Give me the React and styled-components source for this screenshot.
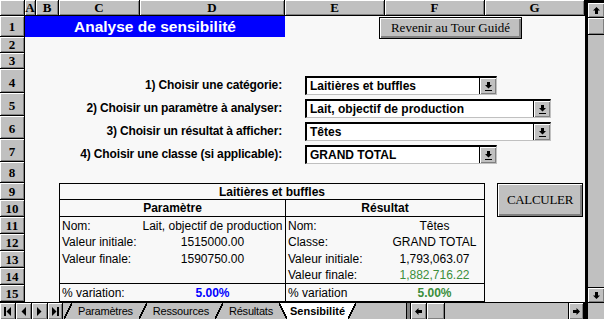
import React from 'react';
import styled, { createGlobalStyle, css } from 'styled-components';

const GRAY = '#c0c0c0';
const SHADE = '#808080';
const PAPER = '#f8f8f8';
const BLUE = '#0000ff';
const GREEN = '#3b8e3b';
const SANS = '"Liberation Sans", Arial, sans-serif';
const SERIF = '"Liberation Serif", "Times New Roman", serif';

const COLUMNS = ['A', 'B', 'C', 'D', 'E', 'F', 'G'];
const ROW_HEIGHTS = [21, 16, 16, 24, 23, 23, 23, 21, 17, 17, 17, 17, 17, 17, 17];

const prompts = [
  { row: 4, label: '1) Choisir une catégorie:', value: 'Laitières et buffles', width: 192 },
  { row: 5, label: '2) Choisir un paramètre à analyser:', value: 'Lait, objectif de production', width: 246 },
  { row: 6, label: '3) Choisir un résultat à afficher:', value: 'Têtes', width: 246 },
  { row: 7, label: '4) Choisir une classe (si applicable):', value: 'GRAND TOTAL', width: 192 },
];

const details = [
  ['Nom:', 'Lait, objectif de production', 'Nom:', 'Têtes'],
  ['Valeur initiale:', '1515000.00', 'Classe:', 'GRAND TOTAL'],
  ['Valeur finale:', '1590750.00', 'Valeur initiale:', '1,793,063.07'],
  ['', '', 'Valeur finale:', '1,882,716.22', GREEN],
];

const sheets = ['Paramètres', 'Ressources', 'Résultats'];

export default function App() {
  return (
    <>
      <GlobalStyle />
      <Window>
        <Sheet>
          <HeaderCell $col={1} $row={1} />
          {COLUMNS.map((c, i) => (
            <HeaderCell key={c} $col={i + 2} $row={1}>{c}</HeaderCell>
          ))}
          {ROW_HEIGHTS.map((h, i) => (
            <HeaderCell key={i} $col={1} $row={i + 2} $bottom={h > 17}>{i + 1}</HeaderCell>
          ))}

          <TitleBar>Analyse de sensibilité</TitleBar>
          <ReturnButton>Revenir au Tour Guidé</ReturnButton>

          {prompts.map((p) => (
            <React.Fragment key={p.row}>
              <PromptLabel $row={p.row + 1}>{p.label}</PromptLabel>
              <Dropdown $row={p.row + 1} $width={p.width}>
                <DropText>{p.value}</DropText>
                <DropButton>
                  <svg width="7" height="9" viewBox="0 0 7 9">
                    <path d="M2 0h3v3h2L3.5 6.5 0 3h2z" fill="#000" />
                    <rect x="0" y="8" width="7" height="1" fill="#000" />
                  </svg>
                </DropButton>
              </Dropdown>
            </React.Fragment>
          ))}

          <ResultTable>
            <TableCell $span={4} $bold $align="center" $under>Laitières et buffles</TableCell>
            <TableCell $span={2} $bold $align="center" $under>Paramètre</TableCell>
            <TableCell $span={2} $bold $align="center" $under $divider>Résultat</TableCell>
            {details.map(([l1, v1, l2, v2, tone], i) => (
              <React.Fragment key={i}>
                <TableCell>{l1}</TableCell>
                <TableCell $align="center">{v1}</TableCell>
                <TableCell $divider>{l2}</TableCell>
                <TableCell $align="center" $tone={tone}>{v2}</TableCell>
              </React.Fragment>
            ))}
            <TableCell $over>% variation:</TableCell>
            <TableCell $over $align="center" $bold $tone={BLUE}>5.00%</TableCell>
            <TableCell $over $divider>% variation</TableCell>
            <TableCell $over $align="center" $bold $tone={GREEN}>5.00%</TableCell>
          </ResultTable>

          <CalcButton>CALCULER</CalcButton>
        </Sheet>

        <VScroll>
          <ScrollButton $h={15}>
            <svg width="7" height="7" viewBox="0 0 7 7"><path d="M3.5 0 7 3.5H5V7H2V3.5H0z" fill="#000" /></svg>
          </ScrollButton>
          <ScrollButton $h={17} />
          <Track />
          <ScrollButton $h={15} $last>
            <svg width="7" height="7" viewBox="0 0 7 7"><path d="M3.5 7 7 3.5H5V0H2v3.5H0z" fill="#000" /></svg>
          </ScrollButton>
        </VScroll>

        <BottomBar>
          <NavGroup>
            <NavButton>
              <svg width="7" height="9" viewBox="0 0 7 9"><rect width="2" height="9" fill="#000" /><path d="M7 0v9L2.5 4.5z" fill="#000" /></svg>
            </NavButton>
            <NavButton>
              <svg width="5" height="9" viewBox="0 0 5 9"><path d="M5 0v9L0.5 4.5z" fill="#000" /></svg>
            </NavButton>
            <NavButton>
              <svg width="5" height="9" viewBox="0 0 5 9"><path d="M0 0v9l4.5-4.5z" fill="#000" /></svg>
            </NavButton>
            <NavButton $w={15}>
              <svg width="7" height="9" viewBox="0 0 7 9"><path d="M0 0v9l4.5-4.5z" fill="#000" /><rect x="5" width="2" height="9" fill="#000" /></svg>
            </NavButton>
          </NavGroup>
          <TabStrip>
            {sheets.map((s) => (
              <React.Fragment key={s}>
                <Slant $shape="fore" $from={GRAY} $to={GRAY} />
                <Tab>{s}</Tab>
              </React.Fragment>
            ))}
            <Slant $shape="back" $from={GRAY} $to="#fff" />
            <Tab $active>Sensibilité</Tab>
            <Slant $shape="fore" $from="#fff" $to={GRAY} />
          </TabStrip>
          <SplitBox />
          <HScroll>
            <ScrollButton $w={16} $h={16} $edge="right">
              <svg width="7" height="7" viewBox="0 0 7 7"><path d="M0 3.5 3.5 0v2H7v3H3.5v2z" fill="#000" /></svg>
            </ScrollButton>
            <ScrollButton $w={18} $h={16} $edge="right" />
            <Track />
            <ScrollButton $w={15} $h={16} $edge="left">
              <svg width="7" height="7" viewBox="0 0 7 7"><path d="M7 3.5 3.5 0v2H0v3h3.5v2z" fill="#000" /></svg>
            </ScrollButton>
          </HScroll>
          <EndCap />
        </BottomBar>
        <SizeBox />
      </Window>
    </>
  );
}

const GlobalStyle = createGlobalStyle`
  html, body {
    margin: 0;
    padding: 0;
    overflow: hidden;
    background: ${GRAY};
  }
`;

const raised = css`
  background: ${GRAY};
  box-shadow: inset 1px 1px #fff, inset -1px -1px ${SHADE};
`;

const Window = styled.div`
  display: grid;
  grid-template-columns: 587px 17px;
  grid-template-rows: 303px 16px;
  width: 604px;
  height: 319px;
  background: ${GRAY};
  font-family: ${SANS};
  color: #000;
`;

const Sheet = styled.div`
  display: grid;
  grid-template-columns: 25px 11px 23px 81px 145px 100px 100px 100px;
  grid-template-rows: 16px ${ROW_HEIGHTS.map((h) => `${h}px`).join(' ')};
  background: ${PAPER};
  border-right: 2px solid #000;
  border-bottom: 1px solid #000;
  overflow: hidden;
`;

const HeaderCell = styled.div`
  ${raised};
  grid-column: ${(p) => p.$col};
  grid-row: ${(p) => p.$row};
  display: flex;
  justify-content: center;
  align-items: ${(p) => (p.$bottom ? 'flex-end' : 'center')};
  padding-bottom: ${(p) => (p.$bottom ? '3px' : '0')};
  box-sizing: border-box;
  border-right: 1px solid #000;
  border-bottom: 1px solid #000;
  font-family: ${SERIF};
  font-weight: bold;
  font-size: 13px;
  line-height: 13px;
`;

const TitleBar = styled.div`
  grid-column: 2 / 6;
  grid-row: 2;
  display: flex;
  align-items: center;
  justify-content: center;
  background: ${BLUE};
  color: #fff;
  font-weight: bold;
  font-size: 15.5px;
`;

const MacroButton = styled.button`
  ${raised};
  box-shadow: inset 1px 1px #fff, inset -1px -1px ${SHADE}, inset -2px -2px ${SHADE};
  border: 1px solid #000;
  padding: 0;
  margin: 0;
  justify-self: start;
  align-self: start;
  font-family: ${SERIF};
  font-size: 13px;
  color: #000;
`;

const ReturnButton = styled(MacroButton)`
  grid-column: 6 / 9;
  grid-row: 2 / 4;
  margin: 1px 0 0 94px;
  width: 143px;
  height: 22px;
`;

const CalcButton = styled(MacroButton)`
  grid-column: 8;
  grid-row: 10 / 13;
  margin-left: 12px;
  width: 86px;
  height: 34px;
  letter-spacing: -0.3px;
`;

const PromptLabel = styled.div`
  grid-column: 2 / 6;
  grid-row: ${(p) => p.$row};
  align-self: end;
  height: 19px;
  margin-bottom: -2px;
  padding-right: 3px;
  line-height: 19px;
  text-align: right;
  white-space: nowrap;
  font-weight: bold;
  font-size: 12px;
  letter-spacing: -0.15px;
`;

const Dropdown = styled.div`
  grid-column: 6 / 9;
  grid-row: ${(p) => p.$row};
  align-self: end;
  justify-self: start;
  display: flex;
  width: ${(p) => p.$width}px;
  height: 19px;
  margin: 0 0 -2px 20px;
  box-sizing: border-box;
  background: #fff;
  border-top: 2px solid #000;
  border-left: 2px solid #000;
  border-bottom: 1px solid ${GRAY};
  border-right: 1px solid ${GRAY};
`;

const DropText = styled.div`
  flex: 1;
  padding-left: 3px;
  line-height: 16px;
  font-weight: bold;
  font-size: 12px;
  white-space: nowrap;
  overflow: hidden;
`;

const DropButton = styled.div`
  ${raised};
  width: 17px;
  display: flex;
  align-items: center;
  justify-content: center;
  border-left: 1px solid #000;
  box-sizing: border-box;
`;

const ResultTable = styled.div`
  grid-column: 4 / 8;
  grid-row: 10 / 17;
  display: grid;
  grid-template-columns: 80px 145px 100px 99px;
  grid-template-rows: 16px 17px 17px 16px 17px 16px 18px;
  border: 1px solid #000;
  font-size: 12px;
`;

const TableCell = styled.div`
  grid-column: span ${(p) => p.$span || 1};
  display: flex;
  align-items: center;
  justify-content: ${(p) => (p.$align === 'center' ? 'center' : 'flex-start')};
  padding-left: ${(p) => (p.$align === 'center' ? '0' : '2px')};
  box-sizing: border-box;
  white-space: nowrap;
  font-weight: ${(p) => (p.$bold ? 'bold' : 'normal')};
  color: ${(p) => p.$tone || '#000'};
  border-left: ${(p) => (p.$divider ? '1px solid #000' : 'none')};
  border-bottom: ${(p) => (p.$under ? '1px solid #000' : 'none')};
  border-top: ${(p) => (p.$over ? '1px solid #000' : 'none')};
`;

const VScroll = styled.div`
  display: flex;
  flex-direction: column;
  background: ${GRAY};
  border-left: 1px solid #000;
  border-top: 3px solid #000;
  border-bottom: 1px solid #000;
`;

const ScrollButton = styled.div`
  ${raised};
  flex: none;
  display: flex;
  align-items: center;
  justify-content: center;
  width: ${(p) => (p.$w ? `${p.$w}px` : 'auto')};
  height: ${(p) => p.$h}px;
  box-sizing: border-box;
  ${(p) =>
    p.$edge
      ? `border-${p.$edge}: 1px solid #000;`
      : p.$last
      ? 'border-top: 1px solid #000;'
      : 'border-bottom: 1px solid #000;'}
`;

const Track = styled.div`
  flex: 1;
  background: ${GRAY};
`;

const BottomBar = styled.div`
  display: flex;
  height: 16px;
  background: ${GRAY};
`;

const NavGroup = styled.div`
  display: flex;
  width: 63px;
`;

const NavButton = styled.div`
  ${raised};
  width: ${(p) => p.$w || 16}px;
  display: flex;
  align-items: center;
  justify-content: center;
  border-right: 1px solid #000;
  box-sizing: border-box;
`;

const TabStrip = styled.div`
  display: flex;
  width: 343px;
  padding-left: 1px;
  box-sizing: border-box;
  font-size: 11px;
`;

const Tab = styled.div`
  display: flex;
  align-items: center;
  padding: 0 ${(p) => (p.$active ? '3px' : '6px')};
  background: ${(p) => (p.$active ? '#fff' : 'transparent')};
  font-weight: ${(p) => (p.$active ? 'bold' : 'normal')};
  letter-spacing: ${(p) => (p.$active ? '0' : '-0.2px')};
  white-space: nowrap;
`;

const Slant = styled.div`
  flex: none;
  width: 8px;
  background: linear-gradient(
    ${(p) => (p.$shape === 'back' ? 'to top right' : 'to bottom right')},
    ${(p) => p.$from} calc(50% - 0.7px),
    #000 calc(50% - 0.7px),
    #000 calc(50% + 0.7px),
    ${(p) => p.$to} calc(50% + 0.7px)
  );
`;

const SplitBox = styled.div`
  width: 5px;
  box-sizing: border-box;
  border-left: 1px solid #000;
  border-right: 1px solid #000;
  background: ${SHADE};
`;

const HScroll = styled.div`
  display: flex;
  width: 172px;
`;

const EndCap = styled.div`
  width: 4px;
  background: #000;
`;

const SizeBox = styled.div`
  background: ${GRAY};
  border-left: 1px solid #000;
`;
